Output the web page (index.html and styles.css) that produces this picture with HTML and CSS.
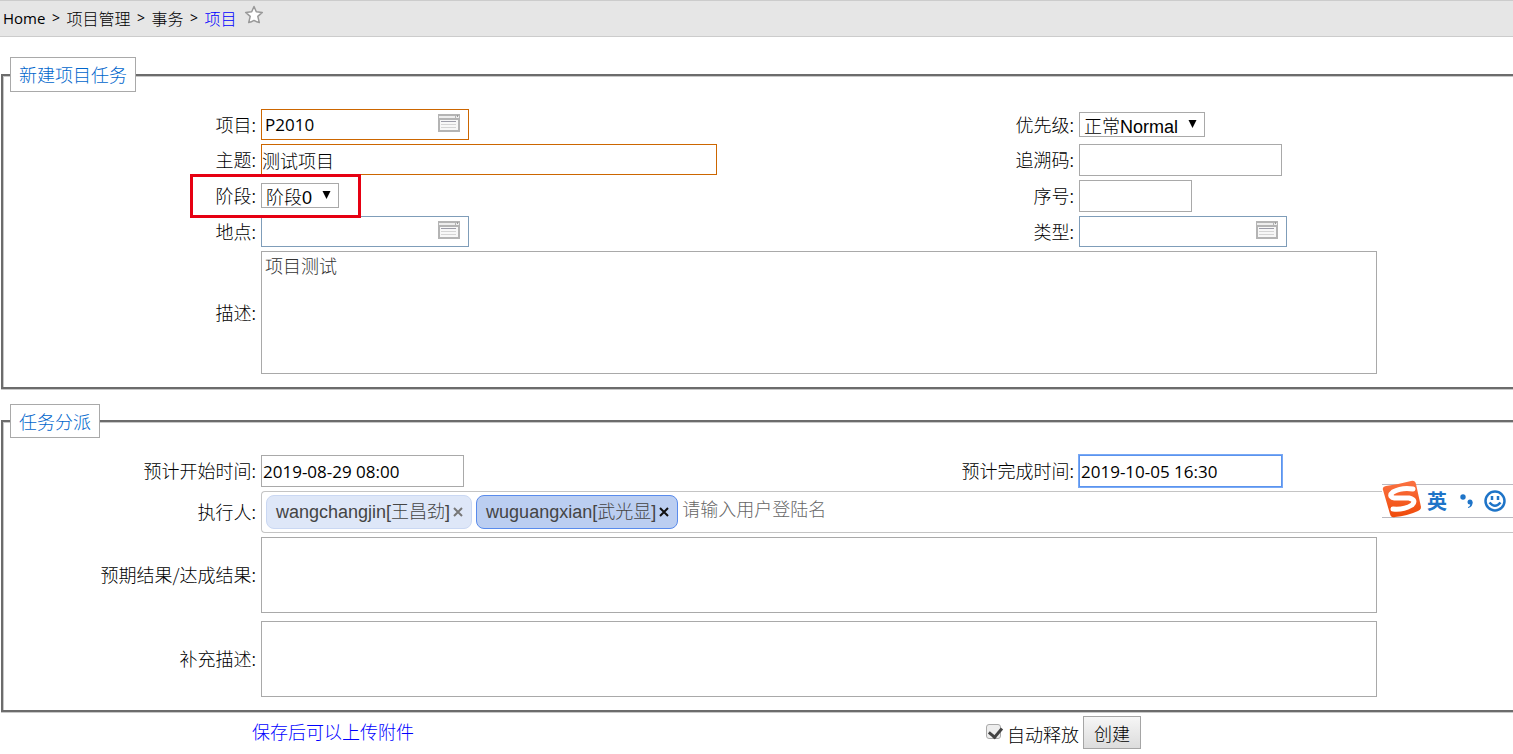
FILE: index.html
```html
<!DOCTYPE html>
<html lang="zh-CN">
<head>
<meta charset="utf-8">
<title>项目</title>
<link rel="stylesheet" href="styles.css">
</head>
<body>
<svg class="defs" aria-hidden="true">
  <symbol id="lookup" viewBox="0 0 22 18">
    <rect x="0" y="0" width="22" height="18" fill="#b4b4b4"/>
    <rect x="1" y="2" width="16" height="2" fill="#eee"/>
    <rect x="18" y="2" width="3" height="2" fill="#eee"/>
    <rect x="19" y="1" width="1" height="2" fill="#999"/>
    <rect x="2" y="6" width="18" height="10" fill="#f7f7f7"/>
    <path d="M3 7.500h15" stroke="#9c9ca8"/>
    <path d="M3 10.500h15M3 13.500h15" stroke="#d4d4d4"/>
  </symbol>
  <symbol id="arrow" viewBox="0 0 8 8"><path d="M0 0h8L4 8z"/></symbol>
</svg>

<nav class="crumbs">
  <span class="latin">Home</span><span class="sep">&gt;</span>
  <span>项目管理</span><span class="sep">&gt;</span>
  <span>事务</span><span class="sep">&gt;</span>
  <a href="#">项目</a>
  <button class="star" type="button" aria-label="收藏">
    <svg width="20" height="20" viewBox="0 0 20 20"><path d="M10 1.500l2.300 5.300 6 .6-4.500 4 1.500 6.200q-2.700-.6-5.300-2.200-2.600 1.600-5.300 2.200l1.500-6.200-4.500-4 6-.6z" fill="#fff" stroke="#999" stroke-width="1.500" stroke-linejoin="round"/></svg>
  </button>
</nav>

<form class="task">
  <fieldset class="panel">
    <legend>新建项目任务</legend>
    <div class="grid details">
      <label for="project">项目:</label>
      <div class="lookup required">
        <input id="project" type="text" value="P2010">
        <button type="button" aria-label="选择项目"><svg><use href="#lookup"/></svg></button>
      </div>
      <label for="priority">优先级:</label>
      <div class="pick priority">
        <select id="priority"><option>正常Normal</option></select>
        <svg><use href="#arrow"/></svg>
      </div>

      <label for="subject">主题:</label>
      <input class="box subject" id="subject" type="text" value="测试项目">
      <label for="trace">追溯码:</label>
      <input class="box medium" id="trace" type="text">

      <label for="stage">阶段:</label>
      <div class="pick stage">
        <select id="stage"><option>阶段0</option></select>
        <svg><use href="#arrow"/></svg>
        <span class="marker"></span>
      </div>
      <label for="serial">序号:</label>
      <input class="box short" id="serial" type="text">

      <label for="place">地点:</label>
      <div class="lookup">
        <input id="place" type="text">
        <button type="button" aria-label="选择地点"><svg><use href="#lookup"/></svg></button>
      </div>
      <label for="kind">类型:</label>
      <div class="lookup">
        <input id="kind" type="text">
        <button type="button" aria-label="选择类型"><svg><use href="#lookup"/></svg></button>
      </div>

      <label for="desc">描述:</label>
      <textarea class="wide desc" id="desc">项目测试</textarea>
    </div>
  </fieldset>

  <fieldset class="panel">
    <legend>任务分派</legend>
    <div class="grid assign">
      <label for="start">预计开始时间:</label>
      <input class="box medium" id="start" type="text" value="2019-08-29 08:00">
      <label for="end">预计完成时间:</label>
      <input class="box medium active" id="end" type="text" value="2019-10-05 16:30">

      <label for="people">执行人:</label>
      <div class="tags">
        <span class="tag">wangchangjin[王昌劲]<button type="button" aria-label="移除"><svg viewBox="0 0 10 10"><path d="M1 1l8 8M9 1l-8 8"/></svg></button></span>
        <span class="tag chosen">wuguangxian[武光显]<button type="button" aria-label="移除"><svg viewBox="0 0 10 10"><path d="M1 1l8 8M9 1l-8 8"/></svg></button></span>
        <input id="people" type="text" placeholder="请输入用户登陆名">
        <div class="ime">
          <svg class="ime-logo" viewBox="0 0 40 38">
            <defs><linearGradient id="flame" x1="0" y1="0" x2="0" y2="1"><stop offset="0" stop-color="#fb7242"/><stop offset="1" stop-color="#ef4a0a"/></linearGradient></defs>
            <path d="M4 6Q18 4 29 1Q33 0 34 4L39 27Q39 30 36 31Q25 36 13 37Q9 38 8 34L1 10Q0 7 4 6z" fill="url(#flame)"/>
            <path d="M31 9Q20 7 11 12Q6 16 12 18L27 18Q35 20 30 25Q22 30 11 29" fill="none" stroke="#fff" stroke-width="5" stroke-linecap="round" stroke-linejoin="round"/>
          </svg>
          <span>英</span>
          <svg class="ime-dot" viewBox="0 0 14 16"><circle cx="3" cy="4" r="2.700"/><circle cx="10" cy="9" r="2.500"/><path d="M12.500 9Q13 14 8 15L8 14Q11 13 10 10z"/></svg>
          <svg class="ime-face" viewBox="0 0 22 22"><circle cx="11" cy="11" r="9.500"/><path d="M8 6v4M14 6v4M5.500 12.500Q11 19 16.500 12.500"/></svg>
        </div>
      </div>

      <label for="result">预期结果/达成结果:</label>
      <textarea class="wide note" id="result"></textarea>

      <label class="last" for="extra">补充描述:</label>
      <textarea class="wide note last" id="extra"></textarea>
    </div>
  </fieldset>

  <footer class="actions">
    <a href="#">保存后可以上传附件</a>
    <div class="submit">
      <input id="release" type="checkbox" checked>
      <label for="release">自动释放</label>
      <button type="button">创建</button>
    </div>
  </footer>
</form>
</body>
</html>
```
FILE: styles.css
```css
* { box-sizing: border-box; }

body {
  margin: 0;
  overflow-x: hidden;
  background: #fff;
  color: #000;
  font: 300 18px/24px "Noto Sans CJK SC", sans-serif;
}

input, select, textarea, button { font: inherit; color: inherit; }
button { padding: 0; border: 0; background: none; }
a { color: #00f; text-decoration: none; }
svg { display: block; }
.defs { position: absolute; width: 0; height: 0; }

.crumbs {
  display: flex;
  align-items: center;
  gap: 5px;
  height: 37px;
  padding: 0 0 2px 3px;
  border: solid #ccc;
  border-width: 1px 0;
  background: #e6e6e6;
  font-size: 16px;
}
.latin { font-family: "Open Sans", sans-serif; font-weight: 400; font-size: 15px; }
.sep { width: 11px; font: 400 14px/24px "Open Sans", sans-serif; text-align: center; }
.star { align-self: flex-start; margin: 4px 0 0 3px; }

.panel {
  min-width: 0;
  margin: 20px 0 0 1px;
  padding: 0;
  border: 2px solid #6c6c6c;
  border-right: 0;
  box-shadow: inset 1px 1px 0 #c8c8c8, 0 1px 0 #c8c8c8;
}
.panel legend {
  margin-left: 7px;
  padding: 4px 8px 5px;
  border: 1px solid #a9a9a9;
  background: #fff;
  color: #0066cc;
}
.panel + .panel { margin-top: 15px; }
.panel + .panel legend { padding-bottom: 4px; }

.grid {
  display: grid;
  grid-template-columns: minmax(0, 253fr) minmax(0, 653fr) minmax(0, 155fr) minmax(0, 434fr);
  gap: 4px 5px;
  align-items: center;
  padding: 17px 0 13px;
}
.grid > label { padding-bottom: 2px; text-align: right; white-space: nowrap; }
.details { grid-template-rows: 31px 32px 32px 31px auto; }
.last { margin-top: 4px; }

.box, .wide {
  border: 1px solid #a9a9a9;
  border-radius: 0;
  background: #fff;
  outline: 0;
}
.box { height: 32px; padding: 0 1px; font-family: "Open Sans", "Noto Sans CJK SC", sans-serif; font-weight: 400; font-size: 17px; }
.subject { align-self: start; width: 456px; height: 31px; padding: 0; border-color: #cc6600; font-weight: 300; font-size: 18px; }
.medium { width: 203px; }
.short { width: 113px; }
.active { border-color: #5b94ee; box-shadow: 0 0 0 1px #79a9f5; }
.wide { grid-column: 2 / -1; width: calc(100% - 136px); resize: none; }
.desc { height: 123px; padding: 1px 3px; color: #333; }
.note { height: 76px; }

.lookup {
  display: flex;
  width: 208px;
  height: 31px;
  border: 1px solid #7f9db9;
}
.required { border-color: #cc6600; }
.lookup input {
  flex: 1;
  min-width: 0;
  padding: 0 3px;
  border: 0;
  outline: 0;
  background: none;
  font-family: "Open Sans", sans-serif;
  font-weight: 400;
  font-size: 17px;
}
.lookup button { padding: 4px 8px 7px; }
.lookup svg { width: 22px; height: 18px; }

.pick { position: relative; height: 25px; font-family: "Liberation Sans", "Noto Sans CJK SC", sans-serif; }
.pick select {
  display: block;
  width: 100%;
  height: 25px;
  padding: 2px 0 0 4px;
  border: 1px solid #a9a9a9;
  border-radius: 0;
  background: #fff;
  appearance: none;
}
.pick > svg { position: absolute; top: 8px; right: 8px; width: 9px; height: 8px; }
.priority { width: 126px; }
.stage { align-self: start; width: 78px; margin-top: 3px; }
.marker {
  position: absolute;
  inset: -9px -22px -10px -71px;
  border: 3px solid #e60012;
  pointer-events: none;
}

.tags {
  position: relative;
  grid-column: 2 / -1;
  display: flex;
  align-items: center;
  gap: 4px;
  height: 42px;
  padding-left: 4px;
  border: 1px solid #c4c4c4;
  border-right: 0;
  border-radius: 4px 0 0 4px;
}
.tag {
  display: flex;
  align-items: center;
  gap: 3px;
  height: 34px;
  padding: 0 8px 0 9px;
  border: 1px solid #cad8f3;
  border-radius: 8px;
  background: #dee7f8;
  color: #444;
  font-family: "Liberation Sans", "Noto Sans CJK SC", sans-serif;
  white-space: nowrap;
}
.tag svg { width: 10px; height: 10px; fill: none; stroke: #777; stroke-width: 2; }
.chosen { border-color: #598bec; background: #bbcef1; }
.chosen svg { stroke: #111; }
.tags input { width: 160px; height: 30px; margin-bottom: 8px; padding: 0; border: 0; outline: 0; background: none; }
.tags input::placeholder { color: #666; opacity: 1; }

.ime {
  position: absolute;
  top: -8px;
  right: 0;
  display: flex;
  align-items: center;
  width: 131px;
  height: 34px;
  padding-right: 7px;
  border: solid #b9b9c0;
  border-width: 1px 0;
  background: #fff;
  color: #1e74c8;
  font-weight: 700;
  font-size: 20px;
}
.ime-logo { flex: none; width: 40px; height: 38px; margin-bottom: 4px; }
.ime span { margin: 0 13px 0 5px; }
.ime-dot { flex: none; width: 14px; height: 16px; margin-right: 10px; fill: #1e74c8; }
.ime-face { flex: none; width: 22px; height: 22px; fill: none; stroke: #1e74c8; stroke-width: 2.500; }

.actions {
  display: flex;
  justify-content: space-between;
  padding: 4px 372px 0 252px;
}
.actions > a { padding-top: 3px; }
.submit { display: flex; align-items: center; }
.submit input {
  width: 15px;
  height: 15px;
  margin: 0 6px 2px 0;
  border: 1px solid #aaa;
  border-radius: 3px;
  appearance: none;
  background: #eee;
}
.submit input:checked::before {
  content: "";
  display: block;
  width: 6px;
  height: 10px;
  margin: 0 0 0 4px;
  border: solid #444;
  border-width: 0 3px 3px 0;
  transform: rotate(40deg);
}
.submit label { padding-top: 2px; }
.submit button {
  width: 58px;
  height: 33px;
  margin-left: 4px;
  border: 1px solid #a5a5a5;
  background: linear-gradient(#f6f6f6, #dcdcdc);
}
```
